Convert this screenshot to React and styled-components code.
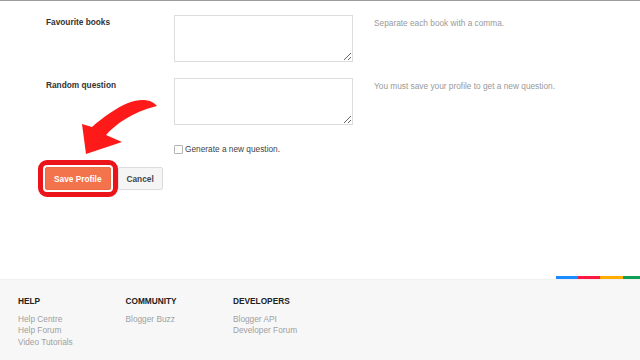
import React from "react";
import styled, { createGlobalStyle } from "styled-components";

const GlobalStyle = createGlobalStyle`
  html, body {
    margin: 0;
    padding: 0;
    background: #fff;
  }
  body {
    font-family: "Liberation Sans", Arial, sans-serif;
    font-size: 8.3px;
  }
`;

const fields = [
  { label: "Favourite books", help: "Separate each book with a comma." },
  { label: "Random question", help: "You must save your profile to get a new question." },
];

const footerCols = [
  { title: "HELP", links: ["Help Centre", "Help Forum", "Video Tutorials"] },
  { title: "COMMUNITY", links: ["Blogger Buzz"] },
  { title: "DEVELOPERS", links: ["Blogger API", "Developer Forum"] },
];

const stripe = [
  { color: "#1a8cff", w: 22 },
  { color: "#ff1744", w: 22 },
  { color: "#ffab00", w: 23 },
  { color: "#0f9d58", w: 17 },
];

const App = () => {
  return (
    <Page>
      <GlobalStyle />
      <Form>
        {fields.map((f) => (
          <Row key={f.label}>
            <Label>{f.label}</Label>
            <TextArea />
            <Help>{f.help}</Help>
          </Row>
        ))}
        <CheckRow>
          <Check type="checkbox" />
          <span>Generate a new question.</span>
        </CheckRow>
        <Actions>
          <Highlight>
            <Button $primary>Save Profile</Button>
          </Highlight>
          <Button>Cancel</Button>
        </Actions>
      </Form>

      <Arrow viewBox="78 95 84 64" width="84" height="64">
        <path
          d="M157 106 C 152 99, 140 98, 128 103 C 116 108, 102 118, 92 127 L 82 124 L 86 154 L 122 142 L 106 135 C 116 124, 132 112, 157 106 Z"
          fill="#ff1a1a"
        />
      </Arrow>

      <Footer>
        <Stripe>
          {stripe.map((s) => (
            <StripePart key={s.color} $color={s.color} $w={s.w} />
          ))}
        </Stripe>
        <FooterBody>
          {footerCols.map((c) => (
            <FooterCol key={c.title}>
              <FooterTitle>{c.title}</FooterTitle>
              {c.links.map((l) => (
                <FooterLink key={l}>{l}</FooterLink>
              ))}
            </FooterCol>
          ))}
        </FooterBody>
      </Footer>
    </Page>
  );
};

export default App;

const Page = styled.div`
  position: relative;
  height: 360px;
  display: flex;
  flex-direction: column;
  border-top: 1px solid #9c9c9c;
  box-sizing: border-box;
  overflow: hidden;
`;

const Form = styled.div`
  padding: 14px 0 0 46px;
  color: #333;
`;

const Row = styled.div`
  display: grid;
  grid-template-columns: 128px 179px auto;
  margin-bottom: 16px;
`;

const Label = styled.div`
  font-weight: bold;
  color: #333;
  padding-top: 2px;
  line-height: 11px;
`;

const TextArea = styled.textarea`
  width: 179px;
  height: 47px;
  box-sizing: border-box;
  border: 1px solid #dcdcdc;
  margin: 0;
  padding: 2px;
  font-family: inherit;
  outline: none;
`;

const Help = styled.div`
  color: #999;
  padding: 3px 0 0 21px;
  line-height: 11px;
`;

const CheckRow = styled.label`
  display: flex;
  align-items: center;
  gap: 2px;
  margin: 19px 0 0 128px;
  color: #444;
  line-height: 11px;
`;

const Check = styled.input`
  appearance: none;
  width: 9px;
  height: 9px;
  margin: 0;
  border: 1px solid #b5b5b5;
  border-radius: 1px;
  background: #fff;
  box-sizing: border-box;
`;

const Actions = styled.div`
  display: flex;
  align-items: center;
  margin: 5px 0 0 -8px;
`;

const Highlight = styled.div`
  display: flex;
  padding: 2px;
  border: 5px solid #ec141b;
  border-radius: 9px;
  background: #fff;
`;

const Button = styled.button`
  height: 23px;
  padding: 0 8px;
  margin: 0;
  font-family: inherit;
  font-size: 8.3px;
  font-weight: bold;
  border-radius: 2px;
  border: 1px solid ${(p) => (p.$primary ? "#ee6a44" : "#dcdcdc")};
  background: ${(p) => (p.$primary ? "#f3744c" : "#f5f5f5")};
  color: ${(p) => (p.$primary ? "#fff" : "#444")};
  min-width: ${(p) => (p.$primary ? "65px" : "44px")};
`;

const Arrow = styled.svg`
  position: absolute;
  left: 78px;
  top: 94px;
  pointer-events: none;
`;

const Footer = styled.div`
  margin-top: auto;
`;

const Stripe = styled.div`
  display: flex;
  justify-content: flex-end;
  height: 3px;
`;

const StripePart = styled.div`
  width: ${(p) => p.$w}px;
  background: ${(p) => p.$color};
`;

const FooterBody = styled.div`
  display: flex;
  height: 81px;
  box-sizing: border-box;
  padding: 16px 0 0 18px;
  background: #f7f7f7;
  border-top: 1px solid #f0f0f0;
`;

const FooterCol = styled.div`
  width: 107.5px;
  display: flex;
  flex-direction: column;
  line-height: 11.5px;
`;

const FooterTitle = styled.div`
  font-weight: bold;
  color: #222;
  margin-bottom: 6px;
`;

const FooterLink = styled.div`
  color: #a0a0a0;
`;
